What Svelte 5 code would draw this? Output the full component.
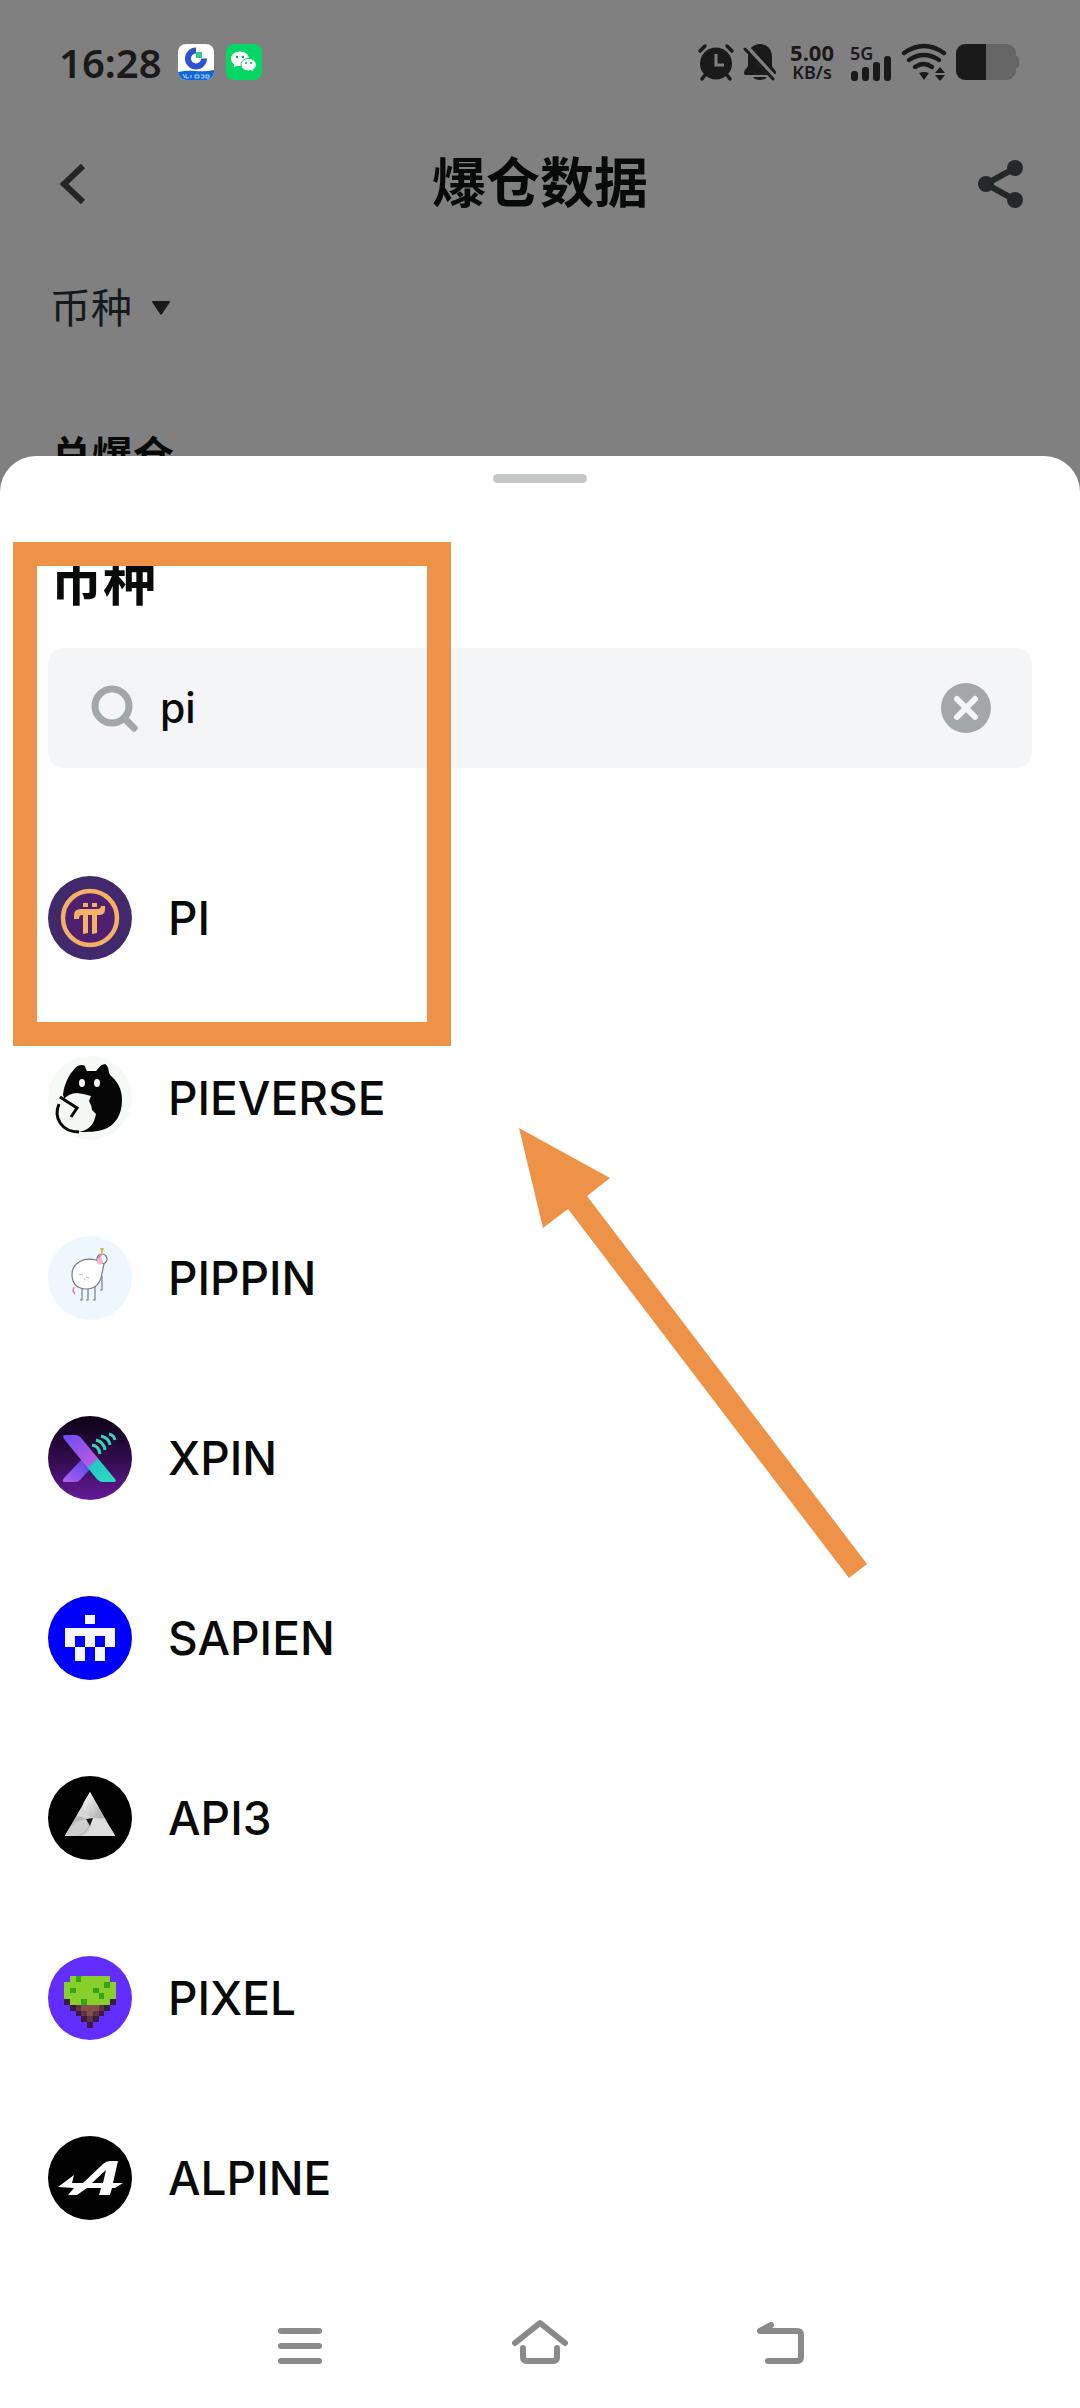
<script>
  const coins = [
    "PI",
    "PIEVERSE",
    "PIPPIN",
    "XPIN",
    "SAPIEN",
    "API3",
    "PIXEL",
    "ALPINE",
  ];

  // [column, row, width] on the 9-column island grid
  const grass = [
    [1, 0, 7],
    [0, 1, 9],
    [0, 2, 9],
    [0, 3, 9],
    [1, 4, 7],
  ];
  const soil = [
    [0, 4, 1],
    [8, 4, 1],
    [1, 5, 7],
    [2, 6, 5],
    [3, 7, 3],
    [4, 8, 1],
  ];
  const tufts = [
    [2, 0],
    [7, 1],
    [1, 2],
    [5, 2],
    [6, 3],
    [3, 4],
  ];

  let query = $state("pi");

  const filtered = $derived(
    coins.filter((x) => x.toLowerCase().includes(query.trim().toLowerCase())),
  );

  const clearQuery = () => {
    query = "";
  };
</script>

<div class="page">
  <div class="status">
    <span class="time">16:28</span>
    <svg class="app" viewBox="0 0 36 36">
      <rect width="36" height="36" rx="8" fill="#fff" />
      <path d="M0 28q9-2 18-1t18-1v2a8 8 0 0 1-8 8H8a8 8 0 0 1-8-8z" fill="#1268d8" />
      <path d="M18 6.500a8 8 0 1 0 8 8" fill="none" stroke="#2c54cf" stroke-width="6" />
      <path d="M18 8h6v6h-6z" fill="#2fcb93" />
      <path
        d="M5 30l2 4M8 30v4h3M13 31v3M17 31h4v3h-4zM23 31h3v3h-3M28 31h3v3h-3z"
        fill="none"
        stroke="#b9d8ff"
        stroke-width="1"
      />
    </svg>
    <svg class="app" viewBox="0 0 36 36">
      <rect width="36" height="36" rx="8" fill="#05d664" />
      <path
        d="M14 7.500c-5 0-9 3.200-9 7.300 0 2.400 1.300 4.400 3.300 5.700L7.600 23.500l3.400-1.800 3 .4c5 0 9-3.200 9-7.300s-4-7.300-9-7.300z"
        fill="#fff"
      />
      <path
        d="M22.500 14.500c-4.300 0-7.500 2.800-7.500 6.200s3.200 6.200 7.500 6.200l2.700-.4 2.800 1.500-.6-2.500c1.700-1.200 2.900-2.800 2.900-4.800 0-3.400-3.500-6.200-7.800-6.200z"
        fill="#fff"
        stroke="#05d664"
        stroke-width="1"
      />
      <g fill="#05a850">
        <circle cx="11" cy="13" r="1.200" />
        <circle cx="17" cy="13" r="1.200" />
        <circle cx="20" cy="19" r="1" />
        <circle cx="25" cy="19" r="1" />
      </g>
    </svg>
    <div class="indicators">
      <svg class="alarm" viewBox="0 0 36 36">
        <g fill="none" stroke="#1a1a1a" stroke-width="3.500" stroke-linecap="round">
          <path d="M2 7l5-5M34 7l-5-5M7 31l-3 4M29 31l3 4" />
        </g>
        <circle cx="18" cy="19.500" r="16" fill="#1a1a1a" />
        <path d="M18 10v11h8" fill="none" stroke="#808080" stroke-width="3" />
      </svg>
      <svg class="bell" viewBox="0 0 34 36">
        <path
          d="M17 0C10 0 5 5 5 13v8c0 3-4 4-4 8 0 2 1 2 2 2h28c1 0 2-1 2-3-1-3-4-4-4-7v-8C29 5 24 0 17 0z"
          fill="#1a1a1a"
        />
        <path d="M10 33h14q-2 3-7 3t-7-3z" fill="#1a1a1a" />
        <path d="M3 3l29 32" stroke="#808080" stroke-width="6" />
        <path d="M2 5l28 30" stroke="#1a1a1a" stroke-width="3" stroke-linecap="round" />
      </svg>
      <div class="speed"><span>5.00</span><small>KB/s</small></div>
      <div class="network">
        <small>5G</small>
        <svg viewBox="0 0 42 26">
          <g fill="#1a1a1a">
            <rect x="1" y="16" width="7" height="10" rx="3" />
            <rect x="12" y="12" width="7" height="14" rx="3" />
            <rect x="23" y="7" width="7" height="19" rx="3" />
            <rect x="34" y="1" width="7" height="25" rx="3" />
          </g>
        </svg>
      </div>
      <svg class="wifi" viewBox="0 0 46 36">
        <g fill="none" stroke="#1a1a1a" stroke-width="4.500" stroke-linecap="round">
          <path d="M3 9q20-14 40 0M8 16q15-10 30 0M14 23q9-6 17 0" />
        </g>
        <path
          d="M18 29q5-2 10 0l-5 7zM34 29l5-6 5 6zM34 31h10l-5 6z"
          fill="#1a1a1a"
        />
      </svg>
      <svg class="battery" viewBox="0 0 64 36">
        <path d="M30 0h21a9 9 0 0 1 9 9v3q3 0 3 3v6q0 3-3 3v3a9 9 0 0 1-9 9H30z" fill="#666" />
        <path d="M30 0H9a9 9 0 0 0-9 9v18a9 9 0 0 0 9 9h21z" fill="#1a1a1a" />
      </svg>
    </div>
  </div>

  <header>
    <button aria-label="返回">
      <svg viewBox="-4 -3 46 48">
        <path d="M23 3L4 21l19 18" fill="none" stroke="#242628" stroke-width="6" />
      </svg>
    </button>
    <h1>爆仓数据</h1>
    <button aria-label="分享">
      <svg viewBox="0 0 46 48">
        <path d="M37 8L8 24l29 16" fill="none" stroke="#242829" stroke-width="6" />
        <g fill="#242829">
          <circle cx="37" cy="8" r="8" />
          <circle cx="8" cy="24" r="8" />
          <circle cx="37" cy="40" r="8" />
        </g>
      </svg>
    </button>
  </header>

  <button class="filter">
    币种
    <svg viewBox="0 0 18 14"><path d="M1 0h16q1 0 1 1l-8 12q-1 1-2 0L0 1q0-1 1-1z" /></svg>
  </button>
  <h3>总爆仓</h3>

  <section class="sheet">
    <div class="handle"></div>
    <h2>币种</h2>
    <label class="search">
      <svg viewBox="0 0 48 48">
        <circle cx="22" cy="22" r="17" />
        <path d="M34 34l10 10" stroke-linecap="round" />
      </svg>
      <input type="text" aria-label="搜索币种" bind:value={query} />
      <button aria-label="清除" onclick={clearQuery}>
        <svg viewBox="0 0 50 50">
          <circle cx="25" cy="25" r="25" />
          <path d="M16 16l18 18M34 16L16 34" />
        </svg>
      </button>
    </label>

    <ul>
      {#each filtered as coin (coin)}
        <li>
          <svg viewBox="0 0 84 84">
            {#if coin === "PI"}
              <circle cx="42" cy="42" r="42" fill="#42296c" />
              <circle cx="42" cy="42" r="27" fill="#4f2070" stroke="#f4b266" stroke-width="4.500" />
              <g fill="#f4b266">
                <path d="M35 27h5v4h-5zM44 27h5v4h-5z" />
                <path d="M26 43v-4q0-6 7-6h16q4 0 4-3h4v3q0 6-6 6H34q-3 0-3 4z" />
                <path d="M35 37h5v20l-5 1zM44 37h5v20l-5 1z" />
              </g>
            {:else if coin === "PIEVERSE"}
              <circle cx="42" cy="42" r="42" fill="#f6faf7" />
              <path
                d="M15 39c1-9 4-16 8-22 4-4 5-8 11-8 4 0 3 3 5 6h9c3-3 4-6 9-7 4 2 3 7 5 11 7 6 12 13 12 25 0 15-7 25-17 29-8 3-17 3-28 3z"
                fill="#050505"
              />
              <ellipse cx="34" cy="27" rx="3" ry="4" fill="#f4f8f5" />
              <ellipse cx="49" cy="27" rx="3" ry="4" fill="#f4f8f5" />
              <path
                d="M15 44q6-7 14-7 8 1 14 3l-2 5q3 5 3 9l4 4q-3 17-19 18-20-2-20-20 1-7 6-12z"
                fill="#f4f8f5"
              />
              <path
                d="M11 48c-6 14 3 28 20 28M12 41l17 11-6 9"
                fill="none"
                stroke="#050505"
                stroke-width="3"
              />
            {:else if coin === "PIPPIN"}
              <circle cx="42" cy="42" r="42" fill="#eff7fe" />
              <g fill="none" stroke="#777980" stroke-width="1.200">
                <path d="M34 50v14h-2M40 50v14h-2M47 50v14h-2M54 40v14h-2" />
                <circle cx="54" cy="23" r="5" fill="#fafafa" />
                <path
                  d="M48 24c-11-3-24 2-24 15 0 9 6 14 14 14 11 0 15-8 16-16l2-9z"
                  fill="#fff"
                />
                <path d="M31 38l4 1M38 41l3 1M36 43l1 1" stroke="#b5b7bc" />
              </g>
              <path d="M49 27q0-6 4-8l2 8-3 2z" fill="#f3b8cf" />
              <path d="M52 12h4l-2 7z" fill="#cfc04a" />
              <path d="M54 18l-4 4M26 51l-1 4 2 3" fill="none" stroke="#d981ab" stroke-width="1.500" />
            {:else if coin === "XPIN"}
              <defs>
                <linearGradient id="night" x2="0" y2="1">
                  <stop stop-color="#0c0214" />
                  <stop offset="0.5" stop-color="#300c4b" />
                  <stop offset="1" stop-color="#661a9a" />
                </linearGradient>
                <linearGradient id="stroke-down" x2="1" y2="1">
                  <stop stop-color="#6a4df5" />
                  <stop offset="0.56" stop-color="#b65be0" />
                  <stop offset="0.6" stop-color="#24c9c0" />
                  <stop offset="1" stop-color="#2fdcc4" />
                </linearGradient>
                <linearGradient id="stroke-up" x1="1" x2="0" y2="1">
                  <stop stop-color="#4a3fe8" />
                  <stop offset="1" stop-color="#b463f2" />
                </linearGradient>
              </defs>
              <circle cx="42" cy="42" r="42" fill="url(#night)" />
              <path d="M35 42l9 9-12 13q-2 2-5 2H17q-4 0-1-4z" fill="url(#stroke-up)" />
              <path
                d="M17 19h10q4 0 7 4l33 40q2 3-1 3H55q-4 0-7-4L16 23q-2-4 1-4z"
                fill="url(#stroke-down)"
              />
              <g fill="none" stroke="#35d6bd" stroke-width="3">
                <path d="M44 29q7 1 8 9M48 24q8 2 9 10M53 20q8 2 9 9M61 18q5 1 6 6" />
              </g>
            {:else if coin === "SAPIEN"}
              <circle cx="42" cy="42" r="42" fill="#0000fe" />
              <path
                d="M37 19h10v9H37zM17 32h50v19H57V40H47v11H37V40H27v11H17zM27 51h10v14H27zM47 51h10v14H47z"
                fill="#f6f6ff"
              />
            {:else if coin === "API3"}
              <defs>
                <linearGradient id="blade" x1="0" x2="1" y2="1">
                  <stop stop-color="#fff" />
                  <stop offset="1" stop-color="#a8a8a8" />
                </linearGradient>
              </defs>
              <circle cx="42" cy="42" r="42" fill="#000" />
              <path d="M42 16l25 44H17z" fill="#d8d8d8" />
              <path d="M42 16l14 26q-10 1-14-1-10-9-6-15z" fill="url(#blade)" />
              <path d="M67 60H34q9-3 10-10l-4-7q18-3 27 17z" fill="#dedede" />
              <path d="M17 60l11-19q4-2 10 2l4 7q-4 10-14 10z" fill="#b6b6b6" />
              <path d="M17 60q6-15 21-17l3 6q-2 8-13 11z" fill="#cdcdcd" />
              <path d="M38 43l7-1-3 8z" fill="#151515" />
            {:else if coin === "PIXEL"}
              <circle cx="42" cy="42" r="42" fill="#622dff" />
              <g transform="translate(16 20) scale(5.78)" shape-rendering="crispEdges">
                {#each grass as [x, y, w]}
                  <rect {x} {y} width={w} height="1" fill="#88cf2c" />
                {/each}
                {#each soil as [x, y, w]}
                  <rect {x} {y} width={w} height="1" fill="#3a1b3d" />
                {/each}
                <path d="M3 5h3v1H5v1H4V6H3z" fill="#815049" />
                <path d="M2 5h1v1H2zM6 5h1v1H6zM3 6h1v1H3zM5 6h1v1H5zM4 7h1v1H4z" fill="#5d3345" />
                {#each tufts as [x, y]}
                  <rect {x} {y} width="1" height="1" fill="#36a414" />
                {/each}
              </g>
            {:else if coin === "ALPINE"}
              <circle cx="42" cy="42" r="42" fill="#000" />
              <path
                d="M10 51l16-12-2 8h11l20-19q3-3 7-3h8l-5 22h10l-8 5h-3l-2 7H51l2-7H39l-10 7h-9l6-7zM44 47h11l3-13z"
                fill="#fff"
                fill-rule="evenodd"
              />
            {/if}
          </svg>
          {coin}
        </li>
      {/each}
    </ul>

    <nav>
      <button aria-label="最近任务">
        <svg viewBox="0 0 60 48"><path d="M11 9h38M11 24h38M11 39h38" /></svg>
      </button>
      <button aria-label="主屏幕">
        <svg viewBox="0 0 60 48">
          <path d="M5 21L30 1l25 20M13 26v9q0 4 4 4h26q4 0 4-4v-9" />
        </svg>
      </button>
      <button aria-label="返回上一页">
        <svg viewBox="0 0 60 48"><path d="M21 3L10 9h37q4 0 4 4v22q0 4-4 4H18" /></svg>
      </button>
    </nav>

    <!-- Callouts over the list -->
    <div class="frame"></div>
    <svg class="arrow" viewBox="0 0 350 452">
      <path d="M0 0l91 50-23 18 280 368-18 14L49 81 24 100z" />
    </svg>
  </section>
</div>

<style>
  :global(body) {
    margin: 0;
    background-color: #808080;
  }

  .page {
    font-family: Inter, "Noto Sans CJK SC", sans-serif;
    color: #080a0a;
    overflow: hidden;
  }

  h1,
  h2,
  h3,
  ul {
    margin: 0;
    padding: 0;
  }

  svg {
    display: block;
    flex: none;
    overflow: visible;
  }

  button {
    padding: 0;
    border: 0;
    background: none;
    color: inherit;
    font: inherit;
    cursor: pointer;
  }

  .status {
    display: flex;
    align-items: center;
    gap: 12px;
    height: 76px;
    padding: 24px 60px 0 59px;
    color: #1a1a1a;
    font-family: "Noto Sans", sans-serif;
  }

  .time {
    font-size: 40px;
    font-weight: 600;
    margin-right: 4px;
  }

  .app {
    width: 36px;
    height: 36px;
  }

  .indicators {
    display: flex;
    align-items: center;
    gap: 9px;
    margin-left: auto;
  }

  .alarm {
    width: 36px;
    height: 36px;
  }

  .bell {
    width: 34px;
    height: 36px;
  }

  .speed {
    display: flex;
    flex-direction: column;
    align-items: center;
    margin: 0 7px 0 4px;
    font-size: 22px;
    font-weight: 700;
    line-height: 20px;
  }

  small {
    font-size: 18px;
    font-weight: 600;
    line-height: 20px;
  }

  .network {
    display: grid;
  }

  .network small,
  .network svg {
    grid-area: 1 / 1;
  }

  .network small {
    height: 38px;
  }

  .network svg {
    width: 42px;
    height: 26px;
    align-self: end;
  }

  .wifi {
    width: 46px;
    height: 36px;
  }

  .battery {
    width: 64px;
    height: 36px;
  }

  header {
    display: flex;
    align-items: center;
    justify-content: space-between;
    height: 80px;
    padding: 44px 56px 0;
  }

  header svg {
    width: 46px;
    height: 48px;
  }

  h1 {
    font-size: 54px;
    font-weight: 700;
    line-height: 80px;
  }

  .filter {
    display: flex;
    align-items: center;
    gap: 20px;
    margin: 54px 0 0 50px;
    color: #16191b;
    font-size: 41px;
    line-height: 60px;
  }

  .filter svg {
    width: 18px;
    height: 14px;
    fill: #16191b;
  }

  h3 {
    margin: 88px 0 0 51px;
    font-size: 41px;
    font-weight: 700;
    line-height: 60px;
  }

  .sheet {
    position: relative;
    margin-top: -30px;
    padding: 18px 48px 0;
    border-radius: 36px 36px 0 0;
    background-color: #fff;
  }

  .handle {
    width: 94px;
    height: 9px;
    margin: 0 auto;
    border-radius: 5px;
    background-color: #c4c7c8;
  }

  h2 {
    margin: 61px 0 0 2px;
    font-size: 53px;
    font-weight: 700;
    line-height: 76px;
  }

  .search {
    display: flex;
    align-items: center;
    height: 120px;
    margin-top: 28px;
    padding: 0 41px 0 42px;
    border-radius: 16px;
    background-color: #f3f5f7;
  }

  .search svg {
    width: 48px;
    height: 48px;
    fill: none;
    stroke: #a2a7aa;
    stroke-width: 7px;
  }

  .search input {
    flex: 1;
    min-width: 0;
    padding: 0;
    margin-left: 22px;
    border: 0;
    outline: 0;
    background: none;
    color: #080a0a;
    font: 500 41px Inter, sans-serif;
  }

  .search button svg {
    width: 50px;
    height: 50px;
    fill: #a2a7aa;
    stroke: none;
  }

  .search button path {
    stroke: #f3f5f7;
    stroke-width: 6px;
    stroke-linecap: round;
  }

  ul {
    margin-top: 60px;
    list-style: none;
  }

  li {
    display: flex;
    align-items: center;
    gap: 36px;
    height: 180px;
    font-size: 46px;
    font-weight: 500;
  }

  li svg {
    width: 84px;
    height: 84px;
  }

  nav {
    display: flex;
    justify-content: center;
    gap: 180px;
    padding: 54px 0 38px;
  }

  nav svg {
    width: 60px;
    height: 48px;
    fill: none;
    stroke: #8a8a8a;
    stroke-width: 6px;
    stroke-linecap: round;
    stroke-linejoin: round;
  }

  .frame {
    position: absolute;
    top: 86px;
    left: 13px;
    width: 390px;
    height: 456px;
    border: 24px solid #ed9246;
    pointer-events: none;
  }

  .arrow {
    position: absolute;
    top: 672px;
    left: 519px;
    width: 350px;
    height: 452px;
    fill: #ed9246;
    pointer-events: none;
  }
</style>
